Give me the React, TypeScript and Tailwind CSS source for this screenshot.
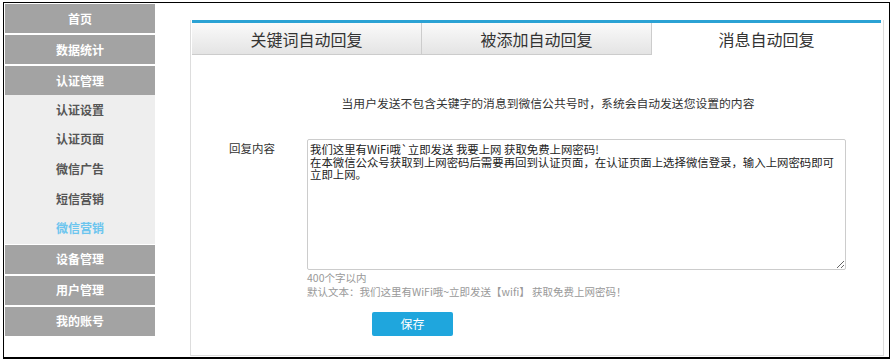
import React from "react";

const F = '"Microsoft YaHei", "Noto Sans CJK SC", "Noto Sans", sans-serif';

export default function App() {
  const top = ["首页", "数据统计", "认证管理"];
  const sub = ["认证设置", "认证页面", "微信广告", "短信营销", "微信营销"];
  const bottom = ["设备管理", "用户管理", "我的账号"];
  const topItem = (t: string) => (
    <div
      key={t}
      className="h-[29px] mb-[2px] bg-[#a3a3a3] text-white text-[12px] font-bold flex items-center justify-center"
    >
      {t}
    </div>
  );
  return (
    <div className="w-[894px] h-[362px] bg-white relative" style={{ fontFamily: F }}>
      <div className="absolute left-[3px] top-[2px] w-[887px] h-[357px] border border-black border-b-2 flex">
        <div className="w-[150px] ml-[1px] mt-[1px] shrink-0">
          {top.map(topItem)}
          <div className="bg-[#eeeeee] -mt-[2px] pb-[1px] mb-[1px]">
            {sub.map((s) => (
              <div
                key={s}
                className={`h-[29.6px] flex items-center justify-center text-[12px] font-bold ${
                  s === "微信营销" ? "text-[#6cc5ee]" : "text-[#555555]"
                }`}
              >
                {s}
              </div>
            ))}
          </div>
          {bottom.map(topItem)}
        </div>
        <div className="ml-[35px] mt-[17px] mr-[5px] mb-[1px] flex-1 border-x border-b border-[#dddddd] flex flex-col">
          <div className="flex border-t-[3px] border-[#2ba2d4] ml-[1px] mr-[2px] h-[35px]">
            <div className="w-[230px] flex items-center justify-center text-[16px] text-[#333] bg-gradient-to-b from-[#fafafa] to-[#e4e4e4] border-r border-b border-[#cccccc]">
              关键词自动回复
            </div>
            <div className="w-[230px] flex items-center justify-center text-[16px] text-[#333] bg-gradient-to-b from-[#fafafa] to-[#e4e4e4] border-r border-b border-[#cccccc]">
              被添加自动回复
            </div>
            <div className="flex-1 flex items-center justify-center text-[16px] text-[#333] bg-white">
              消息自动回复
            </div>
          </div>
          <div className="mt-[40px] text-center pl-[22px] text-[11.8px] text-[#333] leading-[16px]">
            当用户发送不包含关键字的消息到微信公共号时，系统会自动发送您设置的内容
          </div>
          <div className="flex mt-[28px]">
            <div className="w-[116px] pl-[38px] pt-[1px] text-[11.5px] text-[#333]">回复内容</div>
            <div className="flex flex-col">
              <textarea
                className="w-[539px] h-[131px] border border-[#cccccc] rounded-[2px] px-[2px] pt-[3px] text-[11.4px] leading-[12.6px] text-[#222] resize-y outline-none"
                style={{ fontFamily: '"Noto Sans CJK SC", "DejaVu Sans Mono", monospace' }}
                defaultValue={
                  "我们这里有WiFi哦`立即发送 我要上网 获取免费上网密码!\n在本微信公众号获取到上网密码后需要再回到认证页面，在认证页面上选择微信登录，输入上网密码即可\n立即上网。"
                }
              />
              <div className="text-[10.5px] text-[#999] leading-[14px] h-[14px] mt-[1px]">400个字以内</div>
              <div className="text-[10.5px] text-[#999] leading-[14px] h-[14px]">
                默认文本：我们这里有WiFi哦~立即发送【wifi】 获取免费上网密码！
              </div>
              <button className="mt-[13px] ml-[65px] w-[81px] h-[24px] bg-[#1fa6dd] rounded-[2px] text-white text-[12px]">
                保存
              </button>
            </div>
          </div>
        </div>
      </div>
    </div>
  );
}
